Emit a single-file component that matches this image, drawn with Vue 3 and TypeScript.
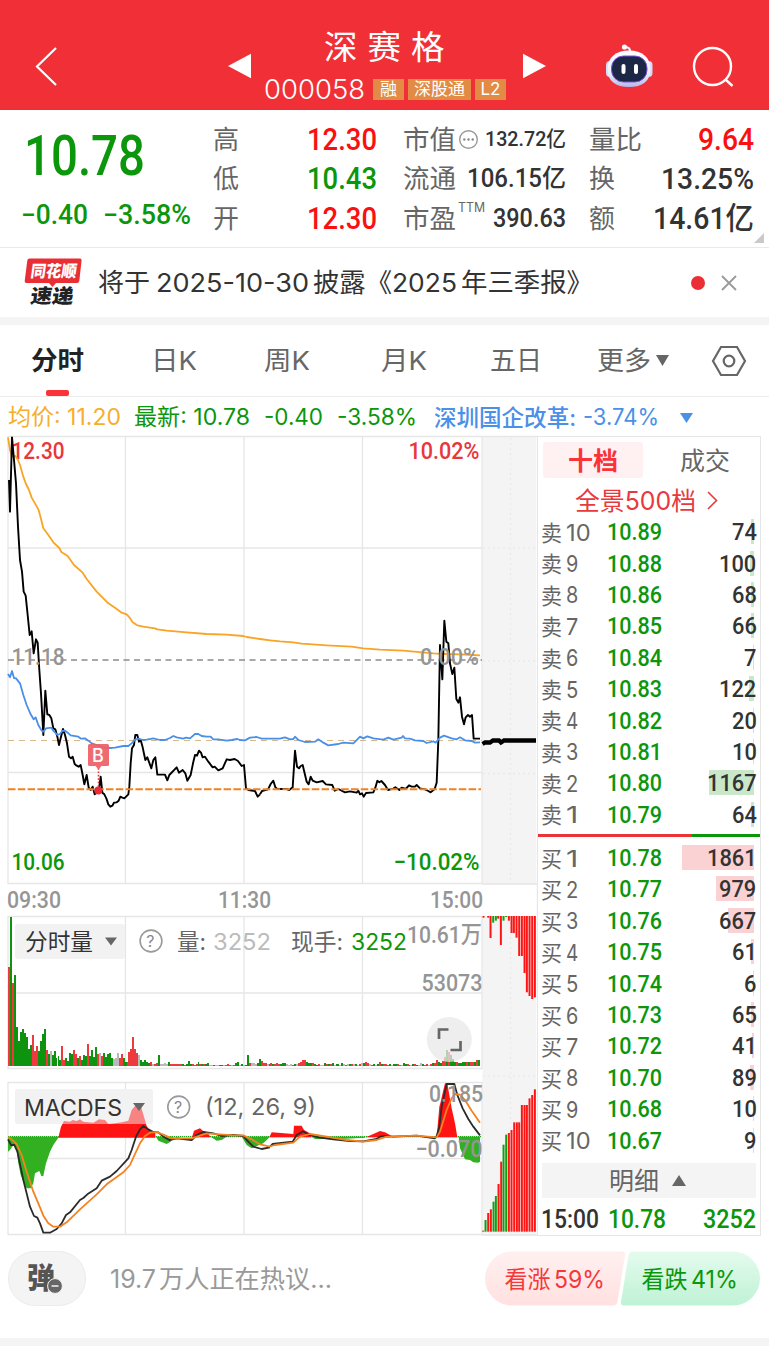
<script setup lang="ts">
import { h } from 'vue'

interface FitProps { t: string; w: number; s: number }
interface LabProps { t: string; w: number; x: number; y: number }

// Single line of text condensed or expanded to an exact advance width.
const Fit = (p: FitProps) =>
  h('svg', { class: 'fit', width: p.w, height: p.s }, [
    h('text', { x: 0, y: p.s * 0.86, 'font-size': p.s, textLength: p.w, lengthAdjust: 'spacingAndGlyphs' }, p.t),
  ])
Fit.props = ['t', 'w', 's']

// Label placed on a chart canvas.
const Lab = (p: LabProps) =>
  h('text', { x: p.x, y: p.y, textLength: p.w, lengthAdjust: 'spacingAndGlyphs' }, p.t)
Lab.props = ['t', 'w', 'x', 'y']

const tabs = [
  { t: '日K', w: 46 },
  { t: '周K', w: 46 },
  { t: '月K', w: 46 },
  { t: '五日', w: 52 },
  { t: '更多', w: 54 },
]

const mk = (side: string, list: [number, string, number][]) =>
  list.map(([n, price, vol]) => ({ side, n: String(n), price, vol: String(vol), bar: vol * 0.0383 }))
const sells = mk('卖', [[10, '10.89', 74], [9, '10.88', 100], [8, '10.86', 68], [7, '10.85', 66], [6, '10.84', 7], [5, '10.83', 122], [4, '10.82', 20], [3, '10.81', 10], [2, '10.80', 1167], [1, '10.79', 64]])
const buys = mk('买', [[1, '10.78', 1861], [2, '10.77', 979], [3, '10.76', 667], [4, '10.75', 61], [5, '10.74', 6], [6, '10.73', 65], [7, '10.72', 41], [8, '10.70', 89], [9, '10.68', 10], [10, '10.67', 9]])
const volW = (v: string) => v.length * 12.4

// Minute volume bars: colour letter followed by height in thirds of a pixel.
const volSrc =
  'r298 g448 r250 g273 g116 g75 g101 g112 g100 g87 g50 g64 r94 r46 r59 g45 g75 g96 g112 r48 g36 a46 g33 g46 g23 g31 g18 r61 r18 g24 g16 g38 g36 r47 r36 g25 r30 g18 g33 g30 r67 g31 g48 g28 g58 r36 a38 r31 g40 g28 g36 g38 g23 a22 a23 a38 r25 r36 g23 g13 ' +
  'r13 r42 r51 r87 r50 r39 a33 g19 g12 g19 g13 g8 r13 a5 r5 r9 g34 a5 a7 a9 a7 g13 r5 r5 r7 r5 r6 r7 g5 r4 g7 g14 g5 r5 r4 r5 g13 r7 g5 r5 g5 g9 a3 a3 g4 a3 a2 g3 g4 a2 r3 r7 r4 a2 r3 g8 g12 a3 g6 a4 ' +
  'g4 g33 r9 a9 a10 a7 g10 g20 r14 r8 r9 a7 g6 r10 g6 r5 r8 r5 g6 g8 g10 a6 a4 a6 r3 g5 a6 r8 r12 r19 r17 g12 g9 g8 r10 g7 g4 r6 a4 a3 g8 r7 g6 r5 g10 a3 g6 g5 a4 g9 a6 r4 a6 g5 r6 a5 g6 a4 r6 a8 ' +
  'g10 r11 r9 a5 r4 g5 a3 g6 r12 g7 r5 r6 r4 g5 a3 g5 g5 r6 r4 a3 g9 g6 r5 g4 a3 g6 r5 g4 a3 a8 g6 r4 r5 a4 r5 g8 r10 r18 g12 g10 r16 r28 g47 r43 g33 g22 g12 r13 g10 g9 g12 g11 r12 g12 r11 r12 g13 r18 g19 a0'
const colors: Record<string, string> = { r: '#ec3a3e', g: '#0e930e', a: '#b9b9bd' }
const volBars = volSrc.split(' ').map((v, i) => ({
  x: 8.2 + i * 1.972, hgt: Number(v.slice(1)) / 3, c: colors[v[0]],
}))

const topSrc: [number, number, string][] = [[670, 38, 'r'], [684, 38, 'r'], [691, 99, 'r'], [699, 53, 'g'], [707, 47, 'g'], [714, 41, 'r'], [722, 120, 'r'], [730, 47, 'g'], [738, 36, 'g'], [746, 47, 'r'], [754, 84, 'r'], [761, 84, 'r'], [769, 98, 'r'], [777, 153, 'r'], [785, 153, 'r'], [793, 204, 'r'], [800, 262, 'r'], [808, 273, 'r'], [816, 282, 'r'], [824, 277, 'r']]
const lowSrc: [number, number, string][] = [[669, 482, 'r'], [676, 450, 'g'], [684, 429, 'r'], [692, 418, 'r'], [700, 395, 'g'], [707, 378, 'g'], [715, 342, 'r'], [723, 275, 'r'], [730, 224, 'g'], [738, 194, 'g'], [746, 189, 'r'], [754, 180, 'r'], [762, 157, 'r'], [770, 157, 'r'], [777, 157, 'r'], [785, 105, 'r'], [793, 105, 'r'], [800, 105, 'r'], [808, 85, 'r'], [816, 75, 'r'], [824, 58, 'r']]
const hot: Record<string, string> = { r: '#ff1414', g: '#12a012' }
</script>

<template>
  <div class="page">
    <header class="top">
      <svg class="back" width="24" height="42" viewBox="0 0 24 42"><path d="M22 2 3 20.5 22 39" /></svg>
      <svg class="prev" width="24" height="26" viewBox="0 0 24 26"><path d="M0 13 23 .8V25.2Z" /></svg>
      <div class="title">
        <h1>深赛格</h1>
        <div class="code">
          <Fit t="000058" :w="101" :s="26.500" />
          <span class="tag t1">融</span><span class="tag t2">深股通</span><span class="tag t3">L2</span>
        </div>
      </div>
      <svg class="next" width="24" height="26" viewBox="0 0 24 26"><path d="M24 13 1 .8V25.2Z" /></svg>
      <svg class="robot" width="50" height="48" viewBox="604 42 50 48">
        <defs>
          <linearGradient id="shell" x1="0" y1="0" x2="0" y2="1"><stop offset="0" stop-color="#fff" /><stop offset=".65" stop-color="#e9edfb" /><stop offset="1" stop-color="#b5b9ec" /></linearGradient>
        </defs>
        <path d="M630 53c.5-4-1-6-5-6" fill="none" stroke="#f0f2ff" stroke-width="2.200" />
        <circle cx="624.500" cy="47" r="2.600" fill="#fff" />
        <rect x="606" y="61" width="8" height="16" rx="4" fill="#d5dcf5" />
        <rect x="644.500" y="61" width="8" height="16" rx="4" fill="#d5dcf5" />
        <path d="M629 50.500c13 0 21.500 7 21.500 18.500 0 12-8 18-21.500 18s-21.500-6-21.500-18c0-11.500 8.500-18.500 21.500-18.500Z" fill="url(#shell)" />
        <rect x="611.500" y="56" width="35.500" height="26" rx="12" fill="#1c2746" stroke="#7b52e0" stroke-width="1" />
        <rect x="621.500" y="64" width="4" height="10" rx="2" fill="#fff" />
        <rect x="634" y="64" width="4" height="10" rx="2" fill="#fff" />
      </svg>
      <svg class="search" width="44" height="44" viewBox="0 0 44 44"><circle cx="20.500" cy="20.500" r="18.500" /><path d="m33 33 7.500 7" /></svg>
    </header>

    <section class="quote">
      <div class="last">
        <Fit class="b g" t="10.78" :w="121" :s="55" />
        <div class="chg g"><Fit class="b" t="−0.40" :w="67" :s="27" /><Fit class="b" t="−3.58%" :w="88" :s="27" /></div>
      </div>
      <dl class="c1">
        <div><dt><Fit t="高" :w="26" :s="26" /></dt><dd class="r"><Fit t="12.30" :w="70" :s="31" /></dd></div>
        <div><dt><Fit t="低" :w="26" :s="26" /></dt><dd class="g"><Fit t="10.43" :w="70" :s="31" /></dd></div>
        <div><dt><Fit t="开" :w="26" :s="26" /></dt><dd class="r"><Fit t="12.30" :w="70" :s="31" /></dd></div>
      </dl>
      <dl class="c2">
        <div>
          <dt><Fit t="市值" :w="53" :s="26" /><svg class="more" width="21" height="21" viewBox="0 0 21 21"><circle cx="10.500" cy="10.500" r="8.800" fill="none" stroke="#999" stroke-width="1.400" /><g fill="#888"><circle cx="6.300" cy="10.500" r="1.200" /><circle cx="10.500" cy="10.500" r="1.200" /><circle cx="14.700" cy="10.500" r="1.200" /></g></svg></dt>
          <dd><Fit t="132.72亿" :w="81" :s="21" /></dd>
        </div>
        <div><dt><Fit t="流通" :w="53" :s="26" /></dt><dd><Fit t="106.15亿" :w="99" :s="25" /></dd></div>
        <div><dt><Fit t="市盈" :w="53" :s="26" /><Fit class="ttm" t="TTM" :w="27" :s="13" /></dt><dd><Fit t="390.63" :w="73" :s="25" /></dd></div>
      </dl>
      <dl class="c3">
        <div><dt><Fit t="量比" :w="53" :s="26" /></dt><dd class="r"><Fit t="9.64" :w="56" :s="31" /></dd></div>
        <div><dt><Fit t="换" :w="26" :s="26" /></dt><dd><Fit t="13.25%" :w="93" :s="30" /></dd></div>
        <div><dt><Fit t="额" :w="26" :s="26" /></dt><dd><Fit t="14.61亿" :w="101" :s="31" /></dd></div>
      </dl>
      <svg class="corner" width="10" height="10" viewBox="0 0 10 10"><path d="M10 0V10H0Z" fill="#c9c9c9" /></svg>
    </section>

    <section class="news">
      <svg width="58" height="50" viewBox="24 258 58 50">
        <path d="M29.500 258.500H80q1.800 0 1.600 1.800l-2.300 20.600q-.3 2-2.300 2H56l-3.500 4-3.500-4H26.500q-2 0-1.800-2l2.600-20.400q.3-2 2.200-2Z" fill="#e92f34" />
        <g transform="skewX(-8)" class="brand">
          <Lab t="同花顺" :x="69" :y="277.500" :w="46" font-size="16.500" fill="#fff" />
          <Lab t="速递" :x="72.500" :y="303.500" :w="43" font-size="19.500" fill="#222" />
        </g>
      </svg>
      <div class="msg"><Fit t="将于" :w="52" :s="26" /><Fit class="m1" t="2025-10-30" :w="153" :s="26" /><Fit class="m2" t="披露《" :w="79" :s="26" /><Fit t="2025" :w="65" :s="26" /><Fit class="m2" t="年三季报》" :w="132" :s="26" /></div>
      <i class="dot"></i>
      <svg class="close" width="18" height="18" viewBox="0 0 18 18"><path d="m2 2 14 14M16 2 2 16" /></svg>
    </section>

    <nav class="tabs">
      <div class="tab on"><Fit t="分时" :w="53" :s="26" /></div>
      <div v-for="t in tabs" :key="t.t" class="tab"><Fit :t="t.t" :w="t.w" :s="26" /></div>
      <svg class="caret" width="13" height="11" viewBox="0 0 13 11"><path d="M0 0H13L6.500 11Z" /></svg>
      <svg class="hex" width="36" height="32" viewBox="0 0 36 32"><path d="M10 2H26L34 16 26 30H10L2 16Z" /><circle cx="18" cy="16" r="5.300" /></svg>
    </nav>

    <div class="info">
      <Fit class="o" t="均价: 11.20" :w="113" :s="22.500" />
      <Fit class="g" t="最新: 10.78" :w="116" :s="22.500" />
      <Fit class="g" t="-0.40" :w="59" :s="22.500" />
      <Fit class="g" t="-3.58%" :w="80" :s="22.500" />
      <Fit class="bl i5" t="深圳国企改革:" :w="142" :s="23" />
      <Fit class="bl i6" t="-3.74%" :w="76" :s="22.500" />
      <svg class="bl i7" width="13" height="10" viewBox="0 0 13 10"><path d="M0 0H13L6.500 10Z" fill="currentColor" /></svg>
    </div>

    <main class="board">
      <svg class="chart" width="538" height="802" viewBox="0 435 538 802">
        <rect x="482.500" y="436" width="53.500" height="448.500" fill="#f4f4f4" />
        <rect x="482.500" y="916" width="53.500" height="320" fill="#f4f4f4" />
        <g class="grid">
          <path d="M8 436.500H482V883.500H8ZM8 548H482M8 772.500H482M125.500 436V883M244 436V883M362.500 436V883" />
          <path d="M8 916.500H482V1068.500H8ZM8 993H482M125.500 916V1068M244 916V1068M362.500 916V1068" />
          <path d="M8 1082.500H482V1234.500H8ZM8 1158.500H482M125.500 1082V1234M244 1082V1234M362.500 1082V1234" />
          <path d="M537.500 436V1235M482 436.500H538M482 884H538M482 1235H538" />
          <path d="M510.500 438V884M483 548H536M483 661H536M483 773.500H536M510.500 917V1234M483 1076H536" stroke-dasharray="2 3" stroke-opacity=".7" />
        </g>

        <g class="ax red"><Lab t="12.30" :x="11.500" :y="459" :w="53" /><Lab t="10.02%" :x="408.500" :y="459" :w="71" /></g>
        <g class="ax green"><Lab t="10.06" :x="11.500" :y="870" :w="53" /><Lab t="−10.02%" :x="393.500" :y="870" :w="86" /></g>
        <g class="ax time"><Lab t="09:30" :x="7" :y="907.500" :w="54" /><Lab t="11:30" :x="218" :y="907.500" :w="53" /><Lab t="15:00" :x="430" :y="907.500" :w="53" /></g>

        <path d="M8 660H482" stroke="#8c8c8c" stroke-width="1.300" stroke-dasharray="6 4.500" />
        <path d="M8 740.500H482" stroke="#d9b88b" stroke-width="1.200" stroke-dasharray="6 5" />
        <g class="line avg">
          <polyline transform="translate(0 430) scale(.33333)" points="24,22 30,60 36,80 46,78 54,90 60,105 70,140 78,162 87,180 95,203 105,220 115,238 120,255 130,295 145,315 160,337 178,354 184,366 203,378 222,405 248,428 260,447 290,485 325,520 345,533 365,548 380,553 388,562 398,577 412,586 430,590 465,595 472,598 500,602 560,607 620,612 680,614 730,618 740,621 780,627 810,631" />
          <polyline transform="translate(260 600) scale(.33333)" points="30,121 60,124 100,127 125,131 200,136 275,140 310,145 360,149 430,152 520,160 560,162 600,163 640,165 660,166" />
        </g>
        <g class="line px">
          <polyline transform="translate(0 430) scale(.33333)" points="27,150 30,245 36,22 42,90 48,160 54,290 60,390 66,425 71,485 77,497 83,555 89,615 95,604 101,670 108,628 113,638 118,720" />
          <polyline transform="translate(0 660) scale(.33333)" points="118,30 123,100 130,225 136,92 142,163 148,165 154,175 160,205 166,208 172,230 177,255 183,230 189,207 195,225 201,250 207,290 213,295 218,290 224,312 230,317 236,320 242,315 248,345 253,373 260,345 266,383 272,390 278,380 284,403 290,398 296,395 302,350 307,398 313,403 319,415 325,433 331,440 337,437 342,428 350,427 356,422 361,410 367,413 373,415 385,403 388,380 392,310 396,265 402,255 406,225 412,225 417,245 422,240 428,262 436,300 442,292 454,325 460,300 466,292 472,344 495,344 502,361 508,345 530,322 537,338 548,330 556,340 562,362 572,345 579,310 585,285 591,287 597,272 603,278 608,292 615,290 625,305 638,322 644,320 655,331 668,325 680,298 690,300 704,297 714,303 725,318 732,315 738,385 745,390 765,393 773,410 780,403" />
          <polyline transform="translate(260 600) scale(.33333)" points="0,583 6,573 24,568 32,552 40,542 46,562 52,567 80,567 88,570 98,562 105,452 111,500 117,505 122,498 128,495 140,545 146,553 152,530 158,542 170,547 188,543 198,553 217,555 224,572 235,567 255,577 270,574 290,578 295,572 300,583 306,580 311,590 318,579 340,577 346,563 352,542 358,547 364,543 375,555 384,570 400,566 406,562 418,570 425,563 437,567 447,556 455,560 465,560 470,555 480,565 495,568 505,573 512,577 524,567 530,548 535,420 540,135 547,238 553,62 559,125 565,130 570,190 577,222 583,203 589,297 595,308 600,292 606,350 612,373 617,352 624,345 630,350 636,345 641,416 660,416" />
        </g>
        <g class="line idx">
          <polyline transform="translate(0 660) scale(.33333)" points="24,42 30,52 36,33 42,54 48,55 60,70 70,105 80,135 92,163 101,178 107,172 115,195 125,212 130,215 138,205 154,203 160,212 172,225 180,222 187,213 195,212 203,218 212,226 235,230 243,236 255,235 265,242 275,250 290,255 310,262 330,264 345,263 370,258 385,258 395,250 405,239 415,236 430,240 440,239 460,235 480,240 495,240 510,234 520,228 530,232 550,236 558,233 570,235 585,222 595,222 605,228 620,230 632,230 640,238 655,238 680,242 695,240 712,237 720,240 735,241 750,233 770,231 785,236 810,236" />
          <polyline transform="translate(260 600) scale(.33333)" points="30,416 60,416 75,412 90,418 100,417 105,410 115,420 135,426 165,425 175,418 190,428 205,436 235,432 250,428 280,430 292,418 300,410 310,415 322,409 340,415 370,419 385,413 400,419 425,413 429,408 435,415 450,416 465,421 490,423 500,429 520,424 527,428 540,413 552,407 575,415 590,418 600,412 615,421 635,423 645,428 660,427" />
        </g>
        <path d="M8 789.300H481" stroke="#f08223" stroke-width="1.900" stroke-dasharray="7.500 2.300" />
        <polyline points="482.500,744 485,742.500 490,742.500 493,740.500 499,740.500 501,742.500 504,740.500 536,740.500" fill="none" stroke="#000" stroke-width="4.300" />
        <g class="ax gray"><Lab t="11.18" :x="11.500" :y="664.500" :w="53" /><Lab t="0.00%" :x="420" :y="664.500" :w="59" /></g>

        <path d="M98.500 768V790" stroke="#ec3a44" stroke-width="1.600" stroke-dasharray="1.700 1.700" />
        <path d="M89.500 744H107.500Q109 744 109 745.500V764.500Q109 766 107.500 766H101.500L98.500 769.500 95.500 766H89.500Q88 766 88 764.500V745.500Q88 744 89.500 744Z" fill="#ee5f66" fill-opacity=".93" />
        <text x="92" y="761.500" font-size="18" fill="#fff" class="bm">B</text>
        <circle cx="98.300" cy="790.500" r="4" fill="#ee2b34" />

        <rect x="15" y="924" width="110" height="35" rx="3" fill="#f2f2f2" />
        <rect x="15" y="1089" width="138" height="35" rx="3" fill="#f2f2f2" />
        <g class="ui">
          <Lab t="分时量" :x="25" :y="950" :w="68" fill="#333" />
          <path d="M105 937.500H117L111 945.500Z" fill="#666" />
          <circle cx="151" cy="941" r="10.900" class="q" /><text x="146.300" y="947" class="qm">?</text>
          <Lab t="量:" :x="177" :y="949.500" :w="29" fill="#666" /><Lab t="3252" :x="213" :y="949.500" :w="58" fill="#bbb" />
          <Lab t="现手:" :x="291" :y="949.500" :w="52" fill="#666" /><Lab t="3252" :x="351" :y="949.500" :w="56" fill="#0b960b" />
        </g>
        <g class="ax gray"><Lab t="10.61万" :x="407" :y="942.500" :w="75" /><Lab t="53073" :x="421.500" :y="991" :w="61" /></g>
        <g shape-rendering="crispEdges">
          <rect v-for="(b, i) in volBars" :key="i" :x="b.x" :y="1066 - b.hgt" width="1.970" :height="b.hgt" :fill="b.c" />
        </g>
        <circle cx="449.300" cy="1039.500" r="22.500" fill="#e8e8e8" fill-opacity=".75" />
        <path d="M439 1039V1029.500H448.500M460.500 1041V1050H450.500" fill="none" stroke="#666" stroke-width="2.700" />

        <rect v-for="(b, i) in topSrc" :key="'t' + i" :x="259.200 + b[0] / 3" y="916" width="2" :height="(b[1] - 33) / 3" :fill="hot[b[2]]" />
        <rect v-for="(b, i) in lowSrc" :key="'l' + i" :x="259.200 + b[0] / 3" :y="1070 + b[1] / 3" width="2" :height="(485 - b[1]) / 3" :fill="hot[b[2]]" />

        <path d="M8 1136.700H481" stroke="#22a522" stroke-width="1.300" stroke-dasharray="1.300 .7" />
        <g transform="translate(0 1070) scale(.33333)">
          <path fill="#32b022" d="M24 200V245L30 240 40 225 50 240 55 280 62 315 72 340 80 355H92L100 340 105 310 118 303 124 318H130L138 280 150 245 160 225 175 203V200ZM468 200 475 212 500 222 512 215 520 205V200ZM632 200 650 212 665 210 680 200ZM725 200 740 225 755 235 790 220 810 200Z" />
          <path fill="#ff1414" d="M175 203 183 170 192 153 210 155 218 150 230 153 240 148 250 155 280 158 297 148 315 150 325 162 345 160 365 157 385 152 395 120 405 108 420 100 432 140 440 168 448 182 466 190V203ZM576 202 582 182 600 175 612 185 625 192 632 202Z" />
        </g>
        <g transform="translate(260 1070) scale(.33333)">
          <path fill="#32b022" d="M0 200V220L25 200ZM155 200 165 207H240L315 203V200ZM596 200 600 235 615 268 630 270 640 277 655 278 660 275V200Z" />
          <path fill="#ff1414" d="M28 202 35 187 100 192 102 167H125L132 180 150 190 155 202ZM318 202 345 190 360 183 375 187 390 195 392 202ZM530 202 538 110 542 95 550 60 555 40H562L568 75 575 115 585 160 592 202Z" />
        </g>
        <path d="M18 1089H150Q153 1089 153 1092V1121Q153 1124 150 1124H18Q15 1124 15 1121V1092Q15 1089 18 1089Z" fill="#f2f2f2" fill-opacity=".5" />
        <g class="line dif">
          <polyline transform="translate(0 1070) scale(.33333)" points="24,208 33,225 43,225 52,245 70,330 90,410 102,438 112,443 120,460 130,488 150,488 170,477 185,460 198,435 210,427 240,390 250,384 262,373 290,355 305,332 330,320 350,303 385,265 395,240 408,200 420,178 430,168 445,178 460,186 475,187 490,200 508,210 530,205 575,210 590,195 610,186 640,190 665,198 700,195 730,198 740,210 760,230 785,237 810,232" />
          <polyline transform="translate(260 1070) scale(.33333)" points="30,230 38,222 98,215 110,195 130,184 145,194 180,203 220,208 270,213 310,214 350,207 360,200 380,198 400,200 470,197 525,205 530,198 538,170 545,110 560,42 583,42 592,75 608,115 625,147 640,170 660,196" />
        </g>
        <g class="line dea">
          <polyline transform="translate(0 1070) scale(.33333)" points="24,202 35,208 50,222 65,255 80,305 100,365 120,412 130,437 145,460 160,470 180,470 200,457 240,418 290,373 320,343 345,325 370,307 390,285 405,252 420,220 435,198 450,188 470,186 490,194 515,205 575,205 620,190 700,196 730,196 755,208 780,223 810,230" />
          <polyline transform="translate(260 1070) scale(.33333)" points="30,229 45,225 100,218 120,200 150,192 200,200 260,210 310,215 350,210 380,200 470,197 530,202 540,185 560,120 575,85 585,72 600,74 615,90 635,122 660,158" />
        </g>
        <g class="ui">
          <Lab t="MACDFS" :x="24" :y="1115.500" :w="98" fill="#333" />
          <path d="M133 1103H145L139 1111Z" fill="#666" />
          <circle cx="178.700" cy="1107" r="10.900" class="q" /><text x="174" y="1113" class="qm">?</text>
          <Lab t="(12, 26, 9)" :x="205" :y="1115" :w="111" fill="#666" />
        </g>
        <g class="ax gray"><Lab t="0.185" :x="429" :y="1102" :w="54" /><Lab t="−0.070" :x="415.500" :y="1157" :w="67" /></g>
      </svg>

      <aside class="book">
        <div class="switch"><b><Fit t="十档" :w="50" :s="25" /></b><span><Fit t="成交" :w="50" :s="25" /></span></div>
        <div class="full"><Fit t="全景500档" :w="121" :s="25" /><svg width="11" height="19" viewBox="0 0 11 19"><path d="m1 1 8.500 8.500L1 18" fill="none" stroke="#e8393d" stroke-width="1.600" /></svg></div>
        <div v-for="r in sells" :key="'s' + r.n" class="row">
          <Fit class="side" :t="r.side" :w="21" :s="21.500" /><div class="n"><Fit :t="r.n" :w="r.n.length * 12.300" :s="23" /></div>
          <Fit class="p g" :t="r.price" :w="55" :s="24" />
          <div class="v"><i class="sell" :style="{ width: r.bar + 'px' }"></i><Fit :t="r.vol" :w="volW(r.vol)" :s="24" /></div>
        </div>
        <div class="ratio"><i></i></div>
        <div v-for="r in buys" :key="'b' + r.n" class="row">
          <Fit class="side" :t="r.side" :w="21" :s="21.500" /><div class="n"><Fit :t="r.n" :w="r.n.length * 12.300" :s="23" /></div>
          <Fit class="p g" :t="r.price" :w="55" :s="24" />
          <div class="v"><i class="buy" :style="{ width: r.bar + 'px' }"></i><Fit :t="r.vol" :w="volW(r.vol)" :s="24" /></div>
        </div>
        <div class="detail"><Fit t="明细" :w="50" :s="25" /><svg width="14" height="11" viewBox="0 0 14 11"><path d="M7 0 14 11H0Z" fill="#666" /></svg></div>
        <div class="tick"><Fit t="15:00" :w="58" :s="25" /><Fit class="g tp" t="10.78" :w="58" :s="25" /><Fit class="g tv" t="3252" :w="53" :s="25" /></div>
      </aside>
    </main>

    <footer class="foot">
      <div class="dan">
        <Fit t="弹" :w="28" :s="29" />
        <svg class="badge" width="16" height="16" viewBox="0 0 16 16"><circle cx="8" cy="8" r="7.400" fill="#666" stroke="#f4f4f4" stroke-width="1" /><path d="M4.500 8H11.500" stroke="#f4f4f4" stroke-width="1.500" /></svg>
      </div>
      <div class="talk"><Fit t="19.7" :w="46" :s="25" /><Fit t="万人正在热议..." :w="173" :s="25" /></div>
      <svg class="vote" width="275" height="55" viewBox="485 1251 275 55">
        <defs>
          <linearGradient id="up" x1="0" y1="0" x2="0" y2="1"><stop offset="0" stop-color="#fff0f0" /><stop offset="1" stop-color="#ffe1e0" /></linearGradient>
          <linearGradient id="down" x1="0" y1="0" x2="0" y2="1"><stop offset="0" stop-color="#e4fbee" /><stop offset="1" stop-color="#bff2d5" /></linearGradient>
        </defs>
        <path d="M512 1251.500H622Q625.500 1251.500 625 1255L617.500 1301.500Q616.500 1305.500 613 1305.500H512A27 27 0 0 1 512 1251.500Z" fill="url(#up)" />
        <path d="M633 1251.500H733A27 27 0 0 1 733 1305.500H624Q620.500 1305.500 621 1302L628.500 1255.500Q629.500 1251.500 633 1251.500Z" fill="url(#down)" />
        <Lab t="看涨" :x="504.500" :y="1288" :w="46" fill="#f5383c" /><Lab t="59%" :x="554" :y="1288" :w="51" fill="#f5383c" />
        <Lab t="看跌" :x="641.500" :y="1288" :w="46" fill="#0b960b" /><Lab t="41%" :x="691" :y="1288" :w="47" fill="#0b960b" />
      </svg>
    </footer>
    <div class="band"></div>
  </div>
</template>

<style>
body { margin: 0; background: #fff; }
.fit { display: block; overflow: visible; flex: none; fill: currentColor; }
</style>

<style scoped>
.page { width: 769px; height: 1346px; overflow: hidden; background: #fff; color: #333; font-family: Inter, "Noto Sans CJK SC", sans-serif; box-sizing: border-box; }
.page * { box-sizing: border-box; }
.g { color: #0b960b; }
.r { color: #fa1010; }
.bl { color: #4a90e8; }
.o { color: #f6ae2d; }

.top { height: 110px; background: #f03036; display: flex; align-items: flex-start; color: #fff; fill: #fff; }
.back { margin: 46px 0 0 34px; fill: none; stroke: #fff; stroke-width: 2.200; }
.prev { margin: 53px 0 0 170px; }
.title { width: 242px; margin-left: 13px; padding-top: 28px; }
h1 { margin: 0; padding-left: 59px; font-size: 33.500px; line-height: 38px; font-weight: 400; letter-spacing: 10px; white-space: nowrap; }
.code { display: flex; align-items: center; height: 22px; margin-top: 12px; font-weight: 300; }
.code .fit { margin-left: -1px; }
.tag { height: 21px; line-height: 21px; background: #e18b45; text-align: center; font-size: 17px; font-weight: 400; flex: none; }
.t1 { width: 31px; margin-left: 8px; }
.t2 { width: 63px; margin-left: 4px; }
.t3 { width: 31px; margin-left: 4px; }
.next { margin: 53px 0 0 15px; }
.robot { margin: 42px 0 0 58px; }
.search { margin: 45.500px 0 0 38px; fill: none; stroke: #fff; stroke-width: 2.400; }

.quote { position: relative; height: 138px; border-bottom: 1px solid #e9e9e9; display: flex; }
.last { width: 213px; padding: 18px 0 0 24px; font-family: Roboto, sans-serif; font-weight: 500; }
.chg { display: flex; gap: 15px; margin: 18px 0 0 -3px; }
dl { margin: 0; padding-top: 10px; }
dl > div { display: flex; align-items: center; justify-content: space-between; height: 39.500px; }
dt { color: #666; display: flex; align-items: center; font-size: 26px; }
dd { margin: -3px 0 0; font-family: Roboto, "Noto Sans CJK SC", sans-serif; font-weight: 500; }
.c1 { width: 164px; }
.c2 { width: 163px; margin-left: 26px; }
.c3 { width: 165px; margin-left: 23px; }
.more { margin-left: 2px; }
.ttm { margin: -23px 0 0 2px; }
.corner { position: absolute; right: 5px; bottom: 4px; }

.news { height: 69px; display: flex; align-items: center; padding: 0 31px 0 24px; }
.brand { font-family: "Noto Sans CJK SC", sans-serif; font-weight: 900; }
.msg { display: flex; margin-left: 16px; }
.m1 { margin-left: 6px; }
.m2 { margin-left: 4px; }
.dot { width: 14px; height: 14px; border-radius: 50%; background: #ea3034; margin-left: auto; }
.close { margin-left: 15px; fill: none; stroke: #999; stroke-width: 1.800; }

.tabs { height: 80px; padding-left: 31px; border-top: 8px solid #f4f4f4; border-bottom: 1px solid #ececec; display: grid; grid-template-columns: 120px 113px 117px 109px 107px 59px 55px 1fr; align-items: center; color: #666; }
.tab.on { position: relative; color: #222; font-weight: 700; }
.tab.on::after { content: ""; position: absolute; left: 15px; top: 42px; width: 23px; height: 6px; border-radius: 2px; background: #fb3238; }
.caret { fill: #666; }
.hex { fill: none; stroke: #666; stroke-width: 2.200; }

.info { height: 38px; display: flex; align-items: center; padding: 3px 0 0 7.500px; gap: 13.700px; }
.i5 { margin-left: 4px; font-weight: 500; }
.i6 { margin-left: -7px; }
.i7 { margin-left: 7px; }

.board { height: 802px; display: flex; }
.chart { flex: none; display: block; }
.grid path { fill: none; stroke: #e6e6e6; stroke-width: 1.300; }
.ax { font: 500 23.500px Roboto, "Noto Sans CJK SC", sans-serif; }
.ax.red { fill: #e8373c; }
.ax.green { fill: #0b960b; }
.ax.time, .ax.gray { fill: #959595; }
.line polyline { fill: none; vector-effect: non-scaling-stroke; stroke-linejoin: round; }
.avg polyline { stroke: #f9a424; stroke-width: 1.800px; }
.px polyline { stroke: #000; stroke-width: 1.900px; }
.idx polyline { stroke: #4a90e8; stroke-width: 1.800px; }
.dif polyline { stroke: #2b2b2b; stroke-width: 1.800px; }
.dea polyline { stroke: #f58220; stroke-width: 1.800px; }
.ui { font-size: 23px; }
.bm { font-weight: 500; }
.q { fill: none; stroke: #999; stroke-width: 1.600; }
.qm { font-size: 16px; fill: #888; }

.book { width: 223px; border-top: 1px solid #e6e6e6; border-right: 1px solid #e6e6e6; border-bottom: 1px solid #e6e6e6; height: 800px; margin-top: 1px; }
.switch { display: grid; grid-template-columns: 100px 1fr; margin: 5px 0 0 5px; height: 36px; align-items: center; color: #666; }
.switch b { background: #fff1f1; color: #fb3238; height: 36px; border-radius: 3px; display: grid; place-items: center; }
.switch span { padding-left: 37px; }
.full { height: 38px; display: flex; align-items: center; gap: 11px; padding: 6px 0 0 37px; color: #e8393d; }
.row { height: 31.400px; display: flex; align-items: center; padding-left: 3px; color: #333; }
.side { color: #666; margin-top: 2px; }
.n { color: #666; margin-left: 4px; width: 41px; padding-top: 1px; }
.p { font-family: Roboto, sans-serif; font-weight: 500; margin-top: -1px; }
.v { flex: 1; height: 25px; position: relative; display: flex; justify-content: flex-end; align-items: center; padding-right: 3.500px; font-family: Roboto, sans-serif; font-weight: 500; }
.v i { position: absolute; right: 6.500px; top: 0; height: 25px; }
.v .fit { position: relative; margin-top: -1px; }
.sell { background: #c9e8c9; }
.buy { background: #fbd2d4; }
.ratio { height: 3.500px; margin: 4px 0 4.500px; background: #0b960b; }
.ratio i { display: block; height: 3.500px; width: 154px; background: #ec3338; }
.detail { height: 35px; background: #f4f4f4; margin: 7px 4px 0; padding-right: 3px; display: flex; align-items: center; justify-content: center; gap: 13px; color: #666; }
.tick { display: flex; align-items: center; height: 41px; padding-left: 3px; font-family: Roboto, sans-serif; font-weight: 500; }
.tp { margin-left: 9px; }
.tv { margin-left: 37px; }

.foot { height: 101px; display: flex; align-items: flex-start; padding: 14px 0 0 8px; }
.dan { position: relative; width: 78px; height: 55px; border-radius: 27px; background: #f4f4f4; border: 1px solid #ececec; display: flex; align-items: center; padding-left: 18px; font-weight: 800; color: #555; }
.badge { position: absolute; left: 38px; top: 26px; }
.talk { display: flex; gap: 3px; margin: 15px 0 0 24px; color: #999; }
.vote { margin-left: 153px; font-size: 24px; }
.band { height: 8px; background: #f4f4f4; }
</style>
